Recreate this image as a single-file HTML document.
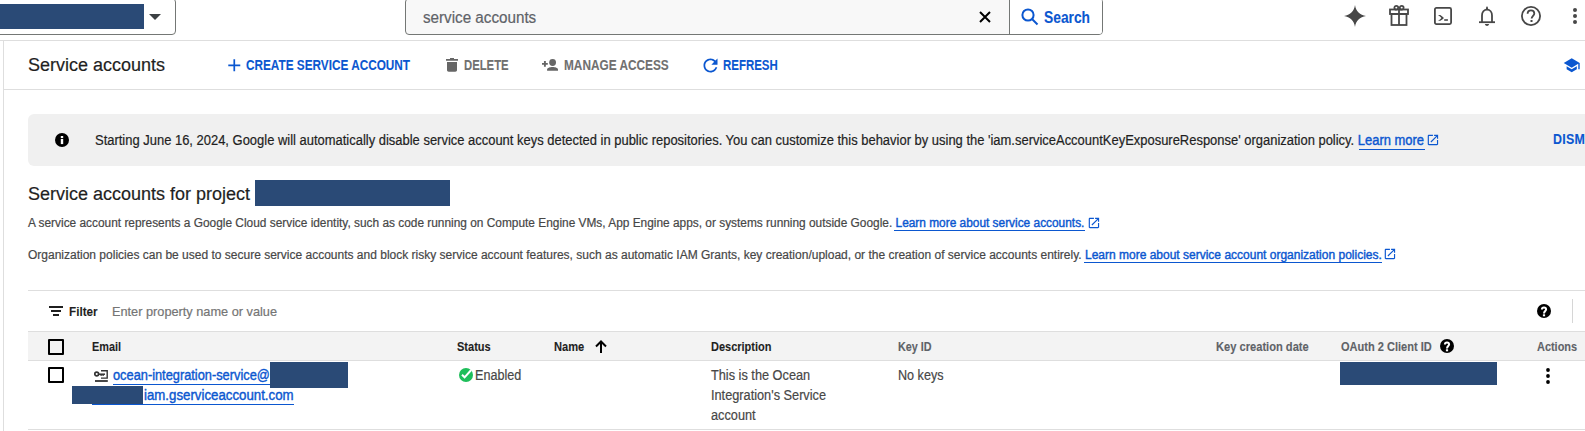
<!DOCTYPE html>
<html><head><meta charset="utf-8">
<style>
html,body{margin:0;padding:0;width:1585px;height:431px;overflow:hidden;background:#fff;}
body{position:relative;font-family:"Liberation Sans",sans-serif;color:#1f1f1f;}
.a{-webkit-text-stroke:0.2px currentColor;position:absolute;white-space:nowrap;line-height:1;}
.hl{position:absolute;height:1px;background:#dedede;}
.vl{position:absolute;width:1px;background:#dedede;}
.navy{position:absolute;background:#2a4a76;}
.b{font-weight:bold;-webkit-text-stroke:0.1px currentColor !important;}
.ul{position:absolute;height:1px;background:#0b57d0;}
.blue{color:#0b57d0;}
.lk{-webkit-text-stroke:0.4px currentColor;}
svg{position:absolute;overflow:visible;}
</style></head><body>

<!-- top bar -->
<div class="a" style="left:-20px;top:-2px;width:194px;height:35px;border:1px solid #747775;border-radius:4px;"></div>
<div class="navy" style="left:0;top:3.5px;width:144px;height:25.8px;"></div>
<svg style="left:149px;top:14px" width="12" height="6"><path d="M0 0H12L6 6Z" fill="#3c4043"/></svg>

<div class="a" style="left:405px;top:-2px;width:696px;height:35px;border:1px solid #747775;border-radius:4px;background:#f8f8f8;overflow:hidden;">
  <div style="position:absolute;left:603px;top:0;width:93px;height:35px;background:#fff;border-left:1px solid #747775;"></div>
</div>
<span id="t1" class="a" style="transform:scaleX(0.95);transform-origin:0 0;left:423px;top:9.6px;font-size:16px;color:#5f6368;">service accounts</span>
<svg style="left:979px;top:11px" width="12" height="12"><path d="M1 1L11 11M11 1L1 11" stroke="#000" stroke-width="2"/></svg>
<svg style="left:1021px;top:8px" width="18" height="18"><circle cx="7" cy="7" r="5.6" fill="none" stroke="#0b57d0" stroke-width="2"/><path d="M11 11L16.5 16.5" stroke="#0b57d0" stroke-width="2"/></svg>
<span id="t2" class="a b blue" style="transform:scaleX(0.863);transform-origin:0 0;left:1044px;top:9.9px;font-size:16px;">Search</span>

<!-- right icons -->
<svg style="left:1344px;top:5px" width="22" height="22"><path d="M11 0C11.8 6 16 10.2 22 11C16 11.8 11.8 16 11 22C10.2 16 6 11.8 0 11C6 10.2 10.2 6 11 0Z" fill="#474747"/></svg>
<svg style="left:1389px;top:5px" width="20" height="21"><g fill="none" stroke="#474747" stroke-width="1.8"><rect x="1" y="4.5" width="18" height="4.5"/><rect x="2.5" y="9" width="15" height="11"/><path d="M10 4.5V20"/><circle cx="7.3" cy="2.8" r="1.9"/><circle cx="12.7" cy="2.8" r="1.9"/></g></svg>
<svg style="left:1434px;top:7px" width="18" height="18"><rect x="0.9" y="0.9" width="16.2" height="16.2" rx="1.5" fill="none" stroke="#474747" stroke-width="1.8"/><path d="M4 7.9H6.3Q8.5 9.6 10 10.9Q8.5 12.2 6.3 13.8H4Q6.3 12.2 7.4 10.9Q6.3 9.6 4 7.9Z" fill="#474747"/><rect x="10.2" y="12.2" width="3.7" height="1.6" fill="#474747"/></svg>
<svg style="left:1479px;top:6px" width="16" height="20"><path d="M3 16V9.5C3 6 5 3.6 8 3.6C11 3.6 13 6 13 9.5V16" fill="none" stroke="#474747" stroke-width="1.8"/><path d="M0 16.2H16" stroke="#474747" stroke-width="1.8"/><path d="M5.8 18H10.2C9.8 19.3 9 19.9 8 19.9C7 19.9 6.2 19.3 5.8 18Z" fill="#474747"/><path d="M6.8 3.8C6.8 2.6 7.3 0.3 8 0.3C8.7 0.3 9.2 2.6 9.2 3.8Z" fill="#474747"/></svg>
<svg style="left:1521px;top:6px" width="20" height="20"><circle cx="10" cy="10" r="9.1" fill="none" stroke="#474747" stroke-width="1.8"/><path d="M6.6 7.8C6.6 5.6 8.2 4.3 10 4.3C11.9 4.3 13.3 5.6 13.3 7.4C13.3 9.6 10.6 10 10.6 12.6" fill="none" stroke="#474747" stroke-width="1.8"/><rect x="9.5" y="14" width="2" height="2" fill="#474747"/></svg>
<svg style="left:1573px;top:8px" width="4" height="16"><circle cx="2" cy="2" r="2" fill="#474747"/><circle cx="2" cy="8" r="2" fill="#474747"/><circle cx="2" cy="14" r="2" fill="#474747"/></svg>

<div class="hl" style="left:0;top:40px;width:1585px;"></div>
<div class="vl" style="left:3px;top:41px;height:390px;"></div>

<!-- toolbar -->
<span id="t3" class="a" style="left:28px;top:56px;font-size:18px;color:#1f1f1f;">Service accounts</span>
<svg style="left:223.7px;top:54.7px" width="20.57" height="20.57" viewBox="0 0 24 24"><path d="M19 13h-6v6h-2v-6H5v-2h6V5h2v6h6v2z" fill="#0b57d0"/></svg>
<span id="t4" class="a b blue" style="transform:scaleX(0.8413);transform-origin:0 0;left:246px;top:57.6px;font-size:14px;">CREATE SERVICE ACCOUNT</span>
<svg style="left:446px;top:58px" width="12" height="14"><path d="M4 0H8V1H12V2.8H0V1H4Z" fill="#666"/><path d="M1 4H11V12C11 13 10.3 13.7 9.3 13.7H2.7C1.7 13.7 1 13 1 12Z" fill="#666"/></svg>
<span id="t5" class="a b" style="transform:scaleX(0.8079);transform-origin:0 0;left:464px;top:57.6px;font-size:14px;color:#707070;">DELETE</span>
<svg style="left:542px;top:59px" width="17" height="12"><path d="M0 4.9H5.8M2.9 2V7.8" stroke="#666" stroke-width="1.9"/><circle cx="10.6" cy="3.5" r="3.4" fill="#666"/><path d="M5.1 11.7V10.4C5.1 8.9 8 8 10.55 8C13.1 8 16 8.9 16 10.4V11.7Z" fill="#666"/></svg>
<span id="t6" class="a b" style="transform:scaleX(0.845);transform-origin:0 0;left:564px;top:57.6px;font-size:14px;color:#707070;">MANAGE ACCESS</span>
<svg style="left:699.5px;top:54.7px" width="21" height="21" viewBox="0 0 24 24"><path d="M17.65 6.35C16.2 4.9 14.21 4 12 4c-4.42 0-7.99 3.58-7.99 8s3.57 8 7.99 8c3.73 0 6.84-2.55 7.73-6h-2.08c-.82 2.33-3.04 4-5.65 4-3.31 0-6-2.69-6-6s2.69-6 6-6c1.66 0 3.14.69 4.22 1.78L13 11h7V4l-2.35 2.35z" fill="#0b57d0"/></svg>
<span id="t7" class="a b blue" style="transform:scaleX(0.8171);transform-origin:0 0;left:723px;top:57.6px;font-size:14px;">REFRESH</span>
<svg style="left:1563.3px;top:55.7px" width="17.45" height="18.67" viewBox="0 0 24 24" preserveAspectRatio="none"><path d="M5 13.18v4L12 21l7-3.82v-4L12 17l-7-3.82zM12 3L1 9l11 6 9-4.91V17h2V9L12 3z" fill="#0b57d0"/></svg>

<div class="hl" style="left:4px;top:89px;width:1581px;"></div>

<!-- banner -->
<div class="a" style="left:28px;top:114px;width:1600px;height:52px;background:#f0f0f0;border-radius:6px;"></div>
<svg style="left:55px;top:132.7px" width="14" height="14"><circle cx="7" cy="7" r="7" fill="#000"/><rect x="5.8" y="5.9" width="2.4" height="5.2" fill="#fff"/><rect x="5.8" y="3" width="2.4" height="2" fill="#fff"/></svg>
<span id="t8" class="a" style="transform:scaleX(0.9254);transform-origin:0 0;left:95px;top:133px;font-size:14px;color:#1f1f1f;">Starting June 16, 2024, Google will automatically disable service account keys detected in public repositories. You can customize this behavior by using the 'iam.serviceAccountKeyExposureResponse' organization policy. <span class="blue lk">Learn more</span></span>
<svg style="left:1426.1px;top:133.3px" width="13.87" height="13.87" viewBox="0 0 24 24"><path d="M19 19H5V5h7V3H5c-1.11 0-2 .9-2 2v14c0 1.1.89 2 2 2h14c1.1 0 2-.9 2-2v-7h-2v7zM14 3v2h3.59l-9.83 9.83 1.41 1.41L19 6.41V10h2V3h-7z" fill="#0b57d0"/></svg>
<span id="t9" class="a b blue" style="transform:scaleX(0.885);transform-origin:0 0;letter-spacing:0.3px;left:1553px;top:131.6px;font-size:14px;">DISMISS</span>

<div class="ul" style="left:1359px;top:149px;width:66px;"></div>
<!-- heading -->
<span id="t10" class="a" style="left:28px;top:185px;font-size:18px;color:#1f1f1f;">Service accounts for project</span>
<div class="navy" style="left:255px;top:180px;width:195px;height:26px;"></div>
<span id="t11" class="a" style="transform:scaleX(0.99);transform-origin:0 0;left:28px;top:217px;font-size:12px;color:#474747;">A service account represents a Google Cloud service identity, such as code running on Compute Engine VMs, App Engine apps, or systems running outside Google. <span class="blue lk">Learn more about service accounts.</span></span>
<svg style="left:1086.5px;top:216.3px" width="13.87" height="13.87" viewBox="0 0 24 24"><path d="M19 19H5V5h7V3H5c-1.11 0-2 .9-2 2v14c0 1.1.89 2 2 2h14c1.1 0 2-.9 2-2v-7h-2v7zM14 3v2h3.59l-9.83 9.83 1.41 1.41L19 6.41V10h2V3h-7z" fill="#0b57d0"/></svg>
<span id="t12" class="a" style="left:28px;top:249px;font-size:12px;color:#474747;">Organization policies can be used to secure service accounts and block risky service account features, such as automatic IAM Grants, key creation/upload, or the creation of service accounts entirely. <span class="blue lk">Learn more about service account organization policies.</span></span>
<svg style="left:1383.1px;top:247.1px" width="13.87" height="13.87" viewBox="0 0 24 24"><path d="M19 19H5V5h7V3H5c-1.11 0-2 .9-2 2v14c0 1.1.89 2 2 2h14c1.1 0 2-.9 2-2v-7h-2v7zM14 3v2h3.59l-9.83 9.83 1.41 1.41L19 6.41V10h2V3h-7z" fill="#0b57d0"/></svg>

<div class="ul" style="left:894px;top:230px;width:191px;"></div>
<div class="ul" style="left:1084px;top:262px;width:298px;"></div>
<!-- filter -->
<div class="hl" style="left:28px;top:290px;width:1557px;"></div>
<svg style="left:49px;top:306px" width="14" height="10"><path d="M0 1H14M2 5H12M4 9H10" stroke="#1f1f1f" stroke-width="2"/></svg>
<span id="t13" class="a b" style="transform:scaleX(0.9);transform-origin:0 0;left:69px;top:305px;font-size:13px;color:#1f1f1f;">Filter</span>
<span id="t14" class="a" style="transform:scaleX(0.98);transform-origin:0 0;left:112px;top:305px;font-size:13px;color:#757575;">Enter property name or value</span>
<svg style="left:1537px;top:304px" width="14" height="14"><circle cx="7" cy="7" r="7" fill="#000"/><path d="M4.9 5.6C4.9 4.2 5.8 3.4 7 3.4C8.2 3.4 9.1 4.2 9.1 5.4C9.1 6.9 7 7.2 7 9.4" fill="none" stroke="#fff" stroke-width="2"/><rect x="5.9" y="10.3" width="2.2" height="2" fill="#fff"/></svg>
<div class="vl" style="left:1572px;top:299px;height:24px;background:#d6d6d6;"></div>

<!-- table header -->
<div class="a" style="left:28px;top:331px;width:1557px;height:28px;background:#f3f3f3;border-top:1px solid #dedede;border-bottom:1px solid #dedede;"></div>
<div class="a" style="left:48px;top:339px;width:12px;height:12px;border:2px solid #000;border-radius:1px;"></div>
<span id="t15" class="a b" style="transform:scaleX(0.906);transform-origin:0 0;left:92px;top:341px;font-size:12px;color:#1f1f1f;">Email</span>
<span id="t16" class="a b" style="transform:scaleX(0.92);transform-origin:0 0;left:457px;top:341px;font-size:12px;color:#1f1f1f;">Status</span>
<span id="t17" class="a b" style="transform:scaleX(0.927);transform-origin:0 0;left:554px;top:341px;font-size:12px;color:#1f1f1f;">Name</span>
<svg style="left:595px;top:340px" width="12" height="13"><path d="M6 13V1.5M1 6.5L6 1.5L11 6.5" fill="none" stroke="#000" stroke-width="2"/></svg>
<span id="t18" class="a b" style="transform:scaleX(0.915);transform-origin:0 0;left:711px;top:341px;font-size:12px;color:#1f1f1f;">Description</span>
<span id="t19" class="a b" style="transform:scaleX(0.9);transform-origin:0 0;left:898px;top:341px;font-size:12px;color:#5f6368;">Key ID</span>
<span id="t20" class="a b" style="transform:scaleX(0.927);transform-origin:0 0;left:1216px;top:341px;font-size:12px;color:#5f6368;">Key creation date</span>
<span id="t21" class="a b" style="transform:scaleX(0.92);transform-origin:0 0;left:1341px;top:341px;font-size:12px;color:#5f6368;">OAuth 2 Client ID</span>
<svg style="left:1440px;top:338.7px" width="14" height="14"><circle cx="7" cy="7" r="7" fill="#000"/><path d="M4.9 5.6C4.9 4.2 5.8 3.4 7 3.4C8.2 3.4 9.1 4.2 9.1 5.4C9.1 6.9 7 7.2 7 9.4" fill="none" stroke="#fff" stroke-width="2"/><rect x="5.9" y="10.3" width="2.2" height="2" fill="#fff"/></svg>
<span id="t22" class="a b" style="transform:scaleX(0.91);transform-origin:0 0;left:1537px;top:341px;font-size:12px;color:#5f6368;">Actions</span>

<!-- row -->
<div class="a" style="left:48px;top:367px;width:12px;height:12px;border:2px solid #000;border-radius:1px;"></div>
<svg style="left:94px;top:369px" width="15" height="14"><circle cx="2.7" cy="5" r="1.9" fill="none" stroke="#333" stroke-width="1.7"/><path d="M4.5 5.2H11" fill="none" stroke="#333" stroke-width="1.5"/><path d="M7.1 5.2V7.1M9.1 5.2V7.1" fill="none" stroke="#333" stroke-width="1.3"/><path d="M7 1.8H13.2V9.1H7" fill="none" stroke="#333" stroke-width="1.4"/><path d="M1 12H13.8" stroke="#333" stroke-width="1.8"/></svg>
<span id="t23" class="a blue lk" style="transform:scaleX(0.9146);transform-origin:0 0;left:113px;top:368px;font-size:14px;">ocean-integration-service@</span>
<div class="ul" style="left:113px;top:384px;width:157px;"></div>
<div class="navy" style="left:270px;top:362px;width:78px;height:26px;"></div>
<span id="t24" class="a blue lk" style="transform:scaleX(0.947);transform-origin:0 0;left:144px;top:388px;font-size:14px;">iam.gserviceaccount.com</span>
<div class="ul" style="left:92px;top:404px;width:202px;"></div>
<div class="navy" style="left:72px;top:386px;width:71px;height:18px;"></div>
<svg style="left:459px;top:368px" width="15" height="15"><circle cx="7" cy="7" r="7" fill="#1ebe5a"/><path d="M3 6.7L5.6 9.3L12.2 2" fill="none" stroke="#fff" stroke-width="2"/></svg>
<span id="t25" class="a" style="transform:scaleX(0.9007);transform-origin:0 0;left:475px;top:368px;font-size:14px;color:#474747;">Enabled</span>
<span id="t26" class="a" style="transform:scaleX(0.91);transform-origin:0 0;left:711px;top:365px;font-size:14px;color:#474747;line-height:20px;">This is the Ocean<br>Integration's Service<br>account</span>
<span id="t27" class="a" style="transform:scaleX(0.9007);transform-origin:0 0;left:898px;top:368px;font-size:14px;color:#474747;">No keys</span>
<div class="navy" style="left:1340px;top:362px;width:157px;height:23px;"></div>
<svg style="left:1545px;top:368px" width="6" height="16"><circle cx="3" cy="2" r="1.9" fill="#000"/><circle cx="3" cy="8" r="1.9" fill="#000"/><circle cx="3" cy="14" r="1.9" fill="#000"/></svg>
<div class="hl" style="left:28px;top:429px;width:1557px;"></div>

</body></html>
